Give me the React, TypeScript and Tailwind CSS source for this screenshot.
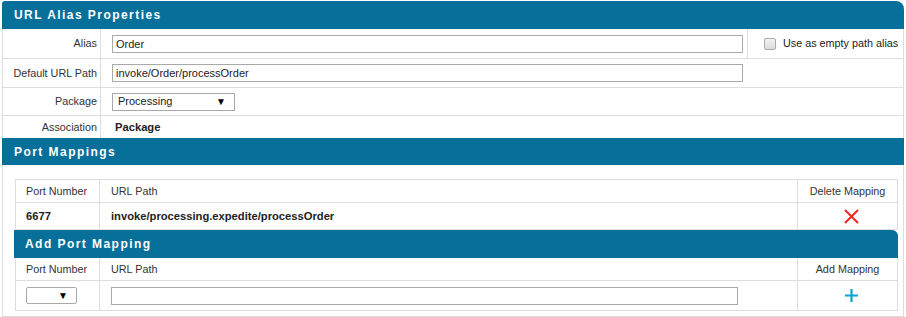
import { useState } from 'react';

// Section header bar used by all three panels
function Bar({ title, className = '' }: { title: string; className?: string }) {
  return (
    <div
      className={`flex items-center bg-[#06709a] text-[12px] font-bold tracking-[1.45px] text-white ${className}`}
    >
      {title}
    </div>
  );
}

function SelectBox({ value, className = '' }: { value: string; className?: string }) {
  return (
    <div
      className={`flex items-center justify-between border border-[#a9a9a9] bg-white pl-[5px] pr-[8px] text-[11px] text-[#222] ${className}`}
    >
      <span>{value}</span>
      <span className="text-[10px] leading-none text-black">▼</span>
    </div>
  );
}

export default function App() {
  const [alias, setAlias] = useState('Order');
  const [path, setPath] = useState('invoke/Order/processOrder');
  const [newPath, setNewPath] = useState('');

  return (
    <div className="h-[317px] w-[906px] bg-white font-['Liberation_Sans',Arial,sans-serif] text-[10.8px] text-[#333]">
      <div className="ml-[2px] w-[902px] pt-[1px]">
        {/* URL Alias Properties */}
        <Bar title="URL Alias Properties" className="h-[28px] rounded-tl-[3px] rounded-tr-[8px] pl-[12px]" />
        <div className="border-x border-[#ddd]">
          <div className="flex h-[30px] border-b border-[#ddd]">
            <div className="flex w-[98px] items-center justify-end border-r border-[#ddd] pr-[3px]">Alias</div>
            <div className="flex w-[647px] items-center border-r border-[#ddd] pl-[11px]">
              <input
                value={alias}
                onChange={(e) => setAlias(e.target.value)}
                className="h-[18px] w-[631px] border border-[#a9a9a9] px-[3px] text-[11px] text-[#222] outline-none"
              />
            </div>
            <div className="flex flex-1 items-center pl-[16px]">
              <span className="h-[12px] w-[12px] shrink-0 rounded-[2px] border border-[#aaa] bg-gradient-to-b from-[#f2f2f2] to-[#dcdcdc]" />
              <span className="ml-[7px] whitespace-nowrap text-[#222]">Use as empty path alias</span>
            </div>
          </div>
          <div className="flex h-[29px] border-b border-[#ddd]">
            <div className="flex w-[98px] items-center justify-end border-r border-[#ddd] pr-[3px]">
              Default URL Path
            </div>
            <div className="flex flex-1 items-center pl-[11px]">
              <input
                value={path}
                onChange={(e) => setPath(e.target.value)}
                className="h-[18px] w-[631px] border border-[#a9a9a9] px-[3px] text-[11px] text-[#222] outline-none"
              />
            </div>
          </div>
          <div className="flex h-[28px] border-b border-[#ddd]">
            <div className="flex w-[98px] items-center justify-end border-r border-[#ddd] pr-[3px]">Package</div>
            <div className="flex flex-1 items-center pl-[11px]">
              <SelectBox value="Processing" className="h-[18px] w-[123px]" />
            </div>
          </div>
          <div className="flex h-[22px]">
            <div className="flex w-[98px] items-center justify-end border-r border-[#ddd] pr-[3px]">Association</div>
            <div className="flex flex-1 items-center pl-[14px] text-[11.2px] font-bold text-[#222]">Package</div>
          </div>
        </div>

        {/* Port Mappings */}
        <Bar title="Port Mappings" className="h-[27px] pl-[12px]" />
        <div className="border-x border-b border-[#ddd] pb-[5px] pl-[12px] pr-[5px] pt-[14px]">
          <div className="border border-[#ddd]">
            <div className="flex h-[23px] border-b border-[#ddd]">
              <div className="flex w-[84px] items-center border-r border-[#ddd] pl-[10px]">Port Number</div>
              <div className="flex flex-1 items-center pl-[11px]">URL Path</div>
              <div className="flex w-[100px] items-center justify-center border-l border-[#ddd]">Delete Mapping</div>
            </div>
            <div className="flex h-[26px] text-[11.2px]">
              <div className="flex w-[84px] items-center border-r border-[#ddd] pl-[10px] font-bold text-[#222]">
                6677
              </div>
              <div className="flex flex-1 items-center pl-[11px] font-bold text-[#222]">
                invoke/processing.expedite/processOrder
              </div>
              <div className="flex w-[100px] items-center justify-center border-l border-[#ddd] pl-[7px]">
                <svg width="15" height="15" viewBox="0 0 15 15">
                  <path d="M1 1L14 14M14 1L1 14" stroke="#f5261a" strokeWidth="2" />
                </svg>
              </div>
            </div>
          </div>

          {/* Add Port Mapping */}
          <Bar title="Add Port Mapping" className="-ml-[1px] h-[28px] rounded-tr-[6px] pl-[11px]" />
          <div className="border-x border-b border-[#ddd]">
            <div className="flex h-[23px] border-b border-[#ddd]">
              <div className="flex w-[84px] items-center border-r border-[#ddd] pl-[10px]">Port Number</div>
              <div className="flex flex-1 items-center pl-[11px]">URL Path</div>
              <div className="flex w-[100px] items-center justify-center border-l border-[#ddd]">Add Mapping</div>
            </div>
            <div className="flex h-[29px]">
              <div className="flex w-[84px] items-center border-r border-[#ddd] pl-[10px]">
                <SelectBox value="" className="h-[17px] w-[51px] rounded-[2px]" />
              </div>
              <div className="flex flex-1 items-center pl-[11px]">
                <input
                  value={newPath}
                  onChange={(e) => setNewPath(e.target.value)}
                  className="h-[18px] w-[627px] border border-[#a9a9a9] px-[3px] text-[11px] outline-none"
                />
              </div>
              <div className="flex w-[100px] items-center justify-center border-l border-[#ddd] pl-[7px]">
                <svg width="15" height="15" viewBox="0 0 15 15">
                  <path d="M7.5 1V14M1 7.5H14" stroke="#0aa5d3" strokeWidth="2.2" />
                </svg>
              </div>
            </div>
          </div>
        </div>
      </div>
    </div>
  );
}
